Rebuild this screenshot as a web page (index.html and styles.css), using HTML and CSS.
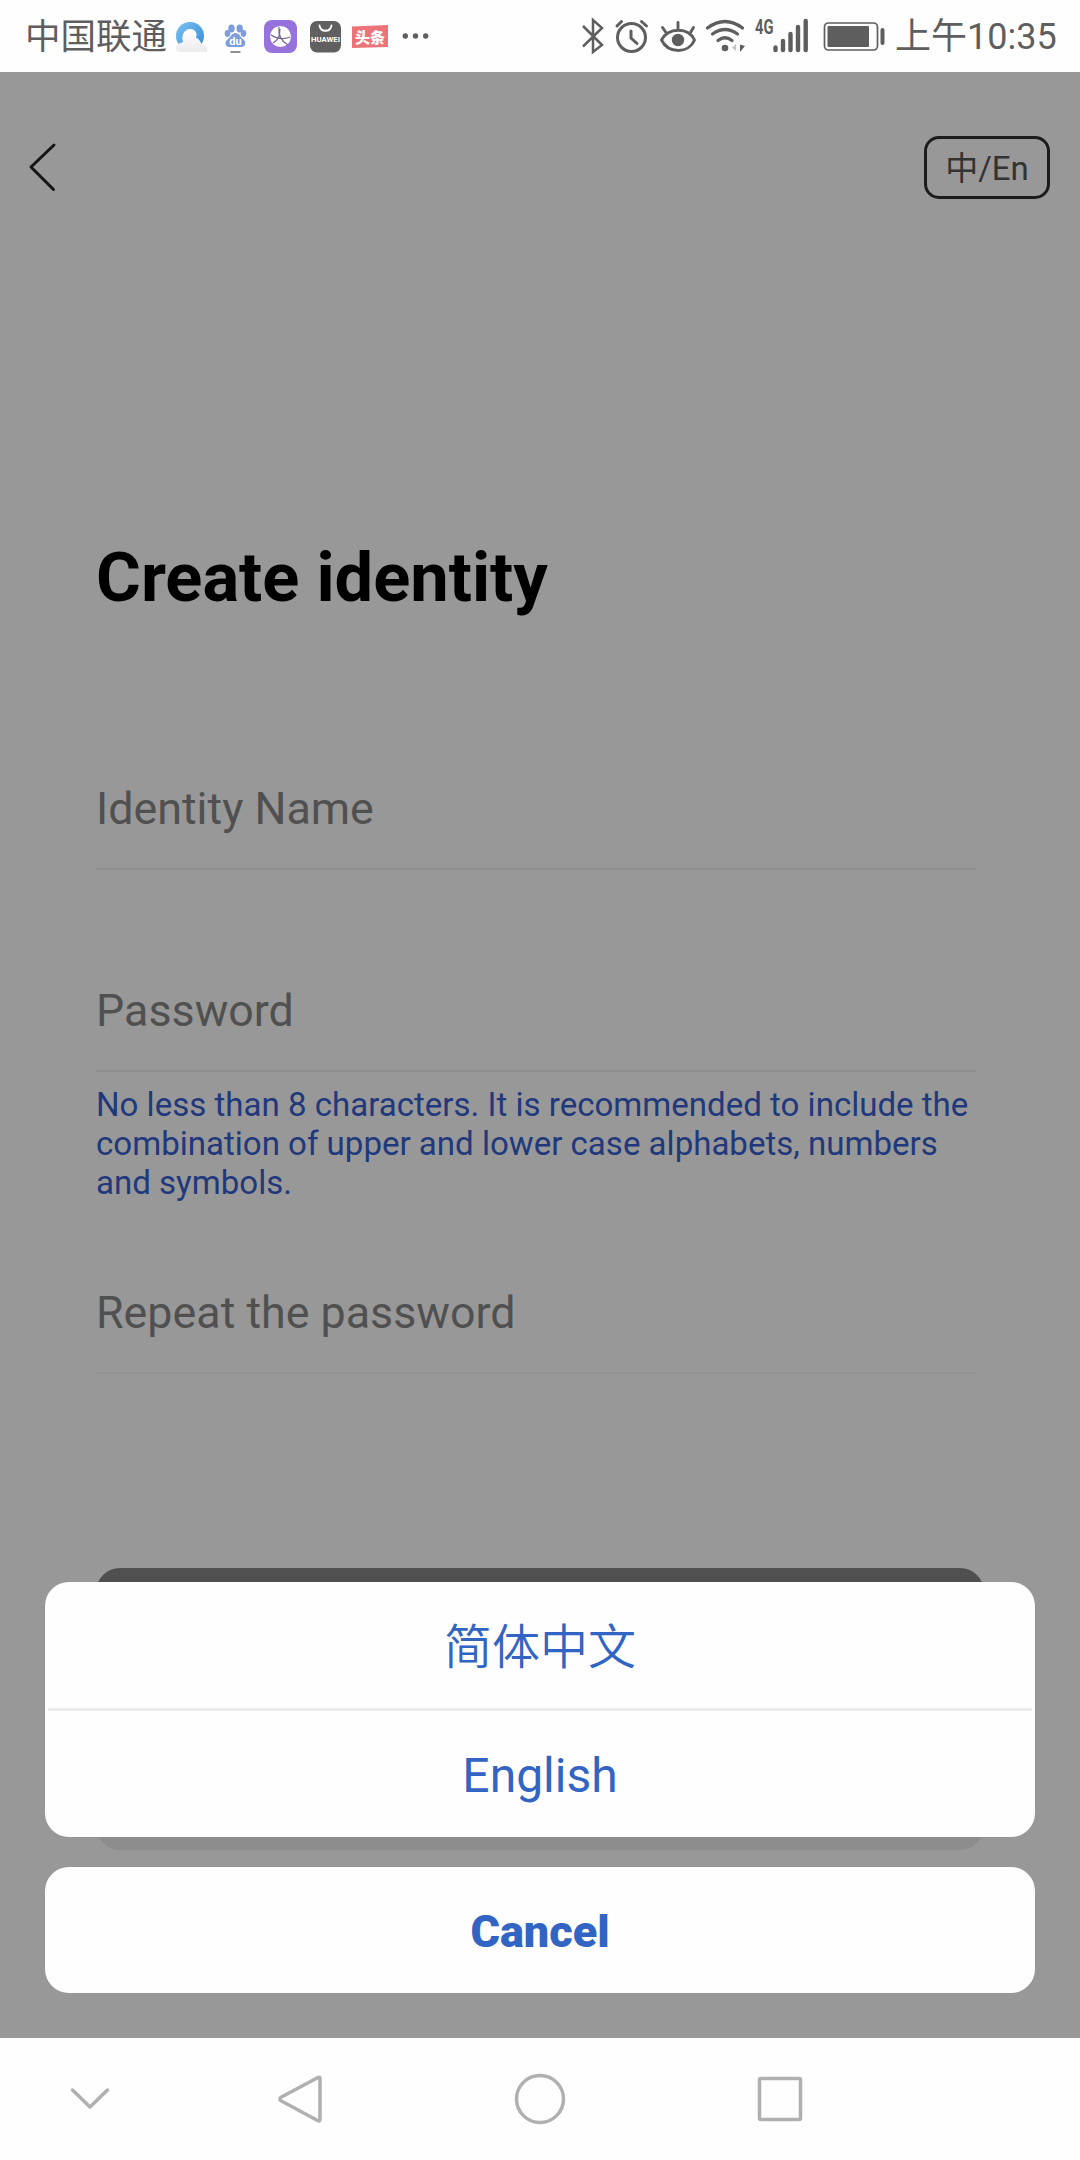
FILE: index.html
```html
<!DOCTYPE html>
<html lang="en">
<head>
<meta charset="utf-8">
<title>Create identity</title>
<link rel="stylesheet" href="styles.css">
</head>
<body>
<div class="phone">
  <header class="status">
    <span class="carrier">中国联通</span>
    <svg class="browser" width="45" height="72" viewBox="172 0 45 72">
      <defs>
        <linearGradient id="ring" x1="0" y1="0" x2="1" y2="1"><stop offset="0" stop-color="#7cc4f0"/><stop offset="1" stop-color="#3187dc"/></linearGradient>
        <linearGradient id="cloud" x1="0" y1="0" x2="0" y2="1"><stop offset="0" stop-color="#fff"/><stop offset="1" stop-color="#ebebee"/></linearGradient>
      </defs>
      <circle cx="190" cy="36" r="14" fill="url(#ring)"/>
      <path d="M181 52c-4 0-6-3-5-6 1-2 4-3 7-4-2-6 1-13 7-13 5 0 8 4 6 9 3 0 4 4 6 6 4 1 6 4 5 8z" fill="url(#cloud)"/>
    </svg>
    <svg width="43" height="72" viewBox="217 0 43 72">
      <g fill="#7d9ddc"><ellipse cx="231.500" cy="28.500" rx="3.200" ry="4"/><ellipse cx="239.700" cy="28.500" rx="3.200" ry="4"/><ellipse cx="227.500" cy="33.500" rx="2.800" ry="3.400"/><ellipse cx="243.500" cy="33.500" rx="2.800" ry="3.400"/><path d="M235.500 33c4 0 4.500 4 7.500 6s3.500 7-1 8h-13c-5-1-4-6-1-8s3.500-6 7.500-6z"/></g>
      <text x="235.500" y="45" class="du">du</text>
      <path d="M230.500 52h10" stroke="#909090" stroke-width="2"/>
    </svg>
    <svg width="44" height="72" viewBox="260 0 44 72">
      <rect x="264" y="20" width="33" height="33" rx="8" fill="#9673dc"/><circle cx="280.500" cy="36.500" r="10.500" fill="#fff"/>
      <path d="M279 27c-1 8 2 14 9 18M280 29c0 7-3 12-7 14M271 35c6 4 12 5 19 2" fill="none" stroke="#77648f" stroke-width="1.200"/>
    </svg>
    <svg width="43" height="72" viewBox="304 0 43 72">
      <rect x="310" y="21" width="31" height="31.500" rx="7" fill="#606060"/><path d="M319.500 25.500c1 7 11 7 12 0" fill="none" stroke="#fff" stroke-width="1.800" stroke-linecap="round"/>
      <text x="325.500" y="42" class="huawei" textLength="29" lengthAdjust="spacingAndGlyphs">HUAWEI</text>
    </svg>
    <svg width="47" height="72" viewBox="347 0 47 72">
      <path d="M352 26.500l36-1.500v22l-36 1z" fill="#ec7479"/><text x="370" y="42.500" class="news">头条</text>
    </svg>
    <svg width="50" height="72" viewBox="394 0 50 72"><g fill="#5e5e5e"><circle cx="405.300" cy="36" r="2.700"/><circle cx="415.500" cy="36" r="2.700"/><circle cx="425.700" cy="36" r="2.700"/></g></svg>

    <svg class="right" width="32" height="72" viewBox="578 0 32 72"><path d="M583 26l19 19-9 7V20l9 8-19 18.500" fill="none" stroke="#5e5e5e" stroke-width="2.500"/></svg>
    <svg width="44" height="72" viewBox="610 0 44 72"><g fill="none" stroke="#5e5e5e" stroke-width="3" stroke-linecap="round"><circle cx="631.500" cy="37.500" r="14"/><path d="M631 31v7l6 5.500M617 26l4.500-4.500M641.500 21.500l5 4.500"/></g></svg>
    <svg width="48" height="72" viewBox="654 0 48 72"><g fill="none" stroke="#5e5e5e" stroke-width="2.900" stroke-linecap="round"><path d="M661.500 40c7-13 27-13 33 0-6 14-26 14-33 0zM678 22.500v6M662.500 27.500l3.500 5M693.500 27.500l-3 5"/></g><circle cx="678" cy="40" r="6.200" fill="#5e5e5e"/></svg>
    <svg width="48" height="72" viewBox="702 0 48 72"><g fill="none" stroke="#5e5e5e" stroke-width="3.200" stroke-linecap="round"><path d="M707.500 28q17.500-13 35 0M712.500 34q12.500-9 25 0M718 40.500q7-5.500 14 0"/></g><circle cx="725" cy="48" r="3.300" fill="#5e5e5e"/><path d="M736 44v7l-4-3.500z" fill="#c4c4c4"/><path d="M740 44.500l5 1.500-5 6z" fill="#5e5e5e"/></svg>
    <svg width="68" height="72" viewBox="750 0 68 72"><text x="755" y="34" class="network" textLength="18.500" lengthAdjust="spacingAndGlyphs">4G</text><path d="M775.500 47.500v2.500M783 41v9M790.500 34v16M798 27v23M805.700 21v29" stroke="#5e5e5e" stroke-width="4.400" stroke-linecap="round"/></svg>
    <svg width="74" height="72" viewBox="818 0 74 72"><rect x="824.500" y="23" width="53" height="27" rx="4" fill="none" stroke="#5e5e5e" stroke-width="1.700"/><rect x="827.500" y="26" width="41.500" height="21" rx="1" fill="#5e5e5e"/><path d="M882.500 30v13" stroke="#5e5e5e" stroke-width="4" stroke-linecap="round"/></svg>
    <span class="time">上午10:35</span>
  </header>

  <main class="screen">
    <div class="topbar">
      <svg width="36" height="56" viewBox="27 140 36 56"><path d="M55 145L32 167l22.500 22.500" fill="none" stroke="#141414" stroke-width="3" stroke-linecap="round" stroke-linejoin="round"/></svg>
      <span class="lang">中/En</span>
    </div>
    <form class="form">
      <h1 class="title">Create identity</h1>
      <div class="field name">Identity Name</div>
      <div class="field pass">Password</div>
      <p class="hint">No less than 8 characters. It is recommended to include the<br>combination of upper and lower case alphabets, numbers<br>and symbols.</p>
      <div class="field repeat">Repeat the password</div>
      <div class="btn primary"></div>
      <div class="btn secondary"></div>
    </form>
    <div class="sheet">
      <div class="group">
        <div class="option chinese">简体中文</div>
        <div class="rule"></div>
        <div class="option english">English</div>
      </div>
      <div class="cancel">Cancel</div>
    </div>
  </main>

  <nav class="nav">
    <svg width="180" height="122" viewBox="0 2038 180 122"><path d="M72.500 2090L90 2107l17.500-17" class="ico"/></svg>
    <svg width="240" height="122" viewBox="180 2038 240 122"><path d="M318 2077.500c1-.8 2 0 2 1v41c0 1-1 2-2 1.200l-37-20c-1.500-1-1.500-2.500 0-3.500z" class="ico"/></svg>
    <svg width="240" height="122" viewBox="420 2038 240 122"><circle cx="540" cy="2099" r="23.500" class="ico"/></svg>
    <svg width="240" height="122" viewBox="660 2038 240 122"><rect x="759.500" y="2078.500" width="41" height="41" rx="1.500" class="ico"/></svg>
  </nav>
</div>
</body>
</html>
```
FILE: styles.css
```css
* { box-sizing: border-box; }
body { margin: 0; background: #fff; font-family: Roboto, "Noto Sans CJK SC", sans-serif; }
svg { display: block; flex: none; }
.phone { width: 1080px; height: 2160px; display: flex; flex-direction: column; overflow: hidden; }

.status { height: 72px; display: flex; color: #5e5e5e; background: #fefefe; }
.carrier { width: 147px; margin-left: 25px; font-size: 35.5px; line-height: 74px; white-space: nowrap; }
.right { margin-left: 134px; }
.time { margin-left: 3px; font-size: 36px; line-height: 75px; white-space: nowrap; }
.du { font: 700 11px Roboto, sans-serif; fill: #fff; text-anchor: middle; }
.huawei { font: 700 7.5px Roboto, sans-serif; fill: #fff; text-anchor: middle; }
.news { font: 900 15px "Noto Sans CJK SC", sans-serif; fill: #fff; text-anchor: middle; }
.network { font: 700 20px Roboto, sans-serif; fill: #5e5e5e; }

.screen { position: relative; height: 1966px; background: #989898; }
.topbar { height: 192px; padding: 64px 30px 0 26px; display: flex; justify-content: space-between; align-items: flex-start; }
.topbar svg { margin-top: 4px; }
.lang { width: 126px; height: 63px; border: 3px solid #1c1c1c; border-radius: 15px; font-size: 33px; line-height: 60px; text-align: center; color: #333; }

.form { padding: 0 96px; }
.title { margin: 0; height: 420px; padding-top: 274px; font-size: 68.6px; line-height: 80px; font-weight: 700; color: #000; white-space: nowrap; }
.field { width: 880px; height: 110px; padding-top: 22px; border-bottom: 2px solid #8f8f8f; font-size: 44.8px; line-height: 54px; color: #505050; white-space: nowrap; }
.name { margin-top: 76px; }
.pass { margin-top: 92px; }
.repeat { margin-top: 62px; border-color: #929295; }
.hint { margin: 13px 0 0; font-size: 33.05px; line-height: 39px; color: #21397c; white-space: nowrap; }
.btn { height: 126px; border-radius: 24px; }
.primary { margin-top: 194px; background: #505050; }
.secondary { margin-top: 30px; background: #8d8d8d; }

.sheet { position: absolute; left: 45px; right: 45px; bottom: 45px; }
.group, .cancel { background: #fefefe; border-radius: 24px; color: #3264c4; text-align: center; }
.group { height: 255px; }
.option { height: 126px; line-height: 130px; font-size: 48px; }
.chinese { line-height: 131px; font-weight: 350; }
.rule { height: 3px; margin: 0 3px; background: #ececec; }
.cancel { margin-top: 30px; height: 126px; font-size: 45px; font-weight: 900; line-height: 129px; }

.nav { height: 122px; display: flex; background: #fefefe; }
.ico { fill: none; stroke: #b0b0b0; stroke-width: 3.5; stroke-linecap: round; stroke-linejoin: round; }
```
